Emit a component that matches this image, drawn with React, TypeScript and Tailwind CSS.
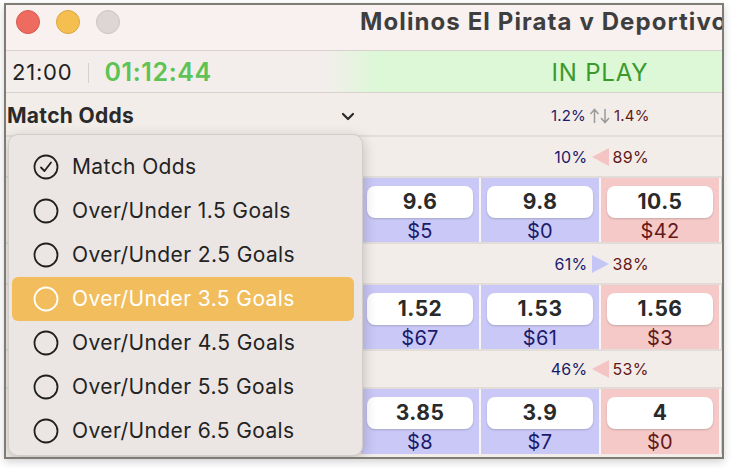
import React from "react";

type OddsCell = { price: string; amount: string; side: "back" | "lay" };

const rows: { left: string; right: string; dir: "left" | "right"; h: string; cells: OddsCell[] }[] = [
  {
    left: "10%",
    right: "89%",
    dir: "left",
    h: "h-[41px]",
    cells: [
      { price: "9.6", amount: "$5", side: "back" },
      { price: "9.8", amount: "$0", side: "back" },
      { price: "10.5", amount: "$42", side: "lay" },
    ],
  },
  {
    left: "61%",
    right: "38%",
    dir: "right",
    h: "h-[41px]",
    cells: [
      { price: "1.52", amount: "$67", side: "back" },
      { price: "1.53", amount: "$61", side: "back" },
      { price: "1.56", amount: "$3", side: "lay" },
    ],
  },
  {
    left: "46%",
    right: "53%",
    dir: "left",
    h: "h-[38px]",
    cells: [
      { price: "3.85", amount: "$8", side: "back" },
      { price: "3.9", amount: "$7", side: "back" },
      { price: "4", amount: "$0", side: "lay" },
    ],
  },
];

const markets = [
  "Match Odds",
  "Over/Under 1.5 Goals",
  "Over/Under 2.5 Goals",
  "Over/Under 3.5 Goals",
  "Over/Under 4.5 Goals",
  "Over/Under 5.5 Goals",
  "Over/Under 6.5 Goals",
];

function Triangle({ dir }: { dir: "left" | "right" }) {
  return (
    <svg width="17" height="18" viewBox="0 0 17 18" className="shrink-0">
      {dir === "left" ? (
        <path d="M0 9 L17 0 L17 18 Z" fill="#f4c4c4" />
      ) : (
        <path d="M17 9 L0 0 L0 18 Z" fill="#c6c6f6" />
      )}
    </svg>
  );
}

function PercentRow({ left, right, h, children }: { left: string; right: string; h: string; children: React.ReactNode }) {
  return (
    <div className={`flex ${h} shrink-0 items-center border-t-2 border-[#e2ddd9]`}>
      <div className="w-[355px] shrink-0" />
      <div className="grid w-[478px] shrink-0 grid-cols-[1fr_auto_1fr] items-center gap-[4px] text-[16px] tracking-[0.3px]">
        <span className="text-right text-[#1b1a6b]">{left}</span>
        {children}
        <span className="text-left text-[#641818]">{right}</span>
      </div>
    </div>
  );
}

function Cell({ cell }: { cell: OddsCell }) {
  const back = cell.side === "back";
  return (
    <div
      className={`flex w-[118px] shrink-0 flex-col items-center pt-[8px] ${
        back ? "bg-[#c9c8f6]" : "bg-[#f5c9c8]"
      }`}
    >
      <div className="flex h-[32px] w-[106px] items-center justify-center rounded-[8px] bg-white text-[21px] font-bold tracking-[0.5px] text-[#2a2a2a] shadow-[0_1px_2px_rgba(0,0,0,0.18)]">
        {cell.price}
      </div>
      <div className={`mt-[1px] text-[20px] leading-[24px] tracking-[0.3px] ${back ? "text-[#1b1a6b]" : "text-[#641818]"}`}>
        {cell.amount}
      </div>
    </div>
  );
}

function MenuIcon({ checked, light }: { checked: boolean; light: boolean }) {
  const c = light ? "#ffffff" : "#1f1f1f";
  return (
    <svg width="26" height="26" viewBox="0 0 26 26" className="shrink-0">
      <circle cx="13" cy="13" r="11.5" fill="none" stroke={c} strokeWidth="1.8" />
      {checked && <path d="M8 13.5 L11.5 17 L18 8.5" fill="none" stroke={c} strokeWidth="1.8" strokeLinecap="round" strokeLinejoin="round" />}
    </svg>
  );
}

export default function App() {
  return (
    <div className="min-h-screen bg-white pl-[4px] pt-[3px] font-['Inter',sans-serif]">
      <div className="relative flex h-[456px] w-[720px] flex-col overflow-hidden border-2 border-[#7e7c74] bg-[#f2ede9] shadow-[0_3px_8px_rgba(0,0,0,0.18)]">
        {/* title bar */}
        <div className="flex h-[46px] shrink-0 items-start border-b border-[#d9d3d0] bg-[#f8f1ef] pt-[5px]">
          <div className="flex gap-[16px] pl-[10px]">
            <span className="h-[24px] w-[24px] rounded-full border border-[#d85a50] bg-[#ee6b5f]" />
            <span className="h-[24px] w-[24px] rounded-full border border-[#dba640] bg-[#f5bf4f]" />
            <span className="h-[24px] w-[24px] rounded-full border border-[#cbc4c2] bg-[#ddd6d4]" />
          </div>
          <div className="ml-[240px] whitespace-nowrap text-[24px] font-bold leading-[24px] tracking-[1.1px] text-[#3e3e3e]">
            Molinos El Pirata v Deportivo
          </div>
        </div>

        {/* status row */}
        <div className="flex h-[42px] shrink-0 items-center border-b border-[#d8d3cf] bg-[linear-gradient(to_right,#f3eeeb_320px,#dcf8d6_372px)] pt-[2px]">
          <div className="flex w-[355px] shrink-0 items-center">
            <span className="pl-[6px] text-[22px] tracking-[0.8px] text-[#222]">21:00</span>
            <span className="ml-[16px] h-[20px] w-px bg-[#d6d1cd]" />
            <span className="ml-[15px] text-[25px] font-semibold tracking-[0.6px] text-[#5cc354]">01:12:44</span>
          </div>
          <div className="w-[478px] shrink-0 text-center text-[24px] tracking-[0.8px] text-[#3a9a2e]">IN PLAY</div>
        </div>

        {/* market header */}
        <div className="flex h-[42px] shrink-0 items-center pt-[4px]">
          <div className="flex w-[355px] shrink-0 items-center justify-between pl-[1px] pr-[6px]">
            <span className="text-[21px] font-bold tracking-[0.3px] text-[#2a2a2a]">Match Odds</span>
            <svg width="14" height="9" viewBox="0 0 14 9">
              <path d="M2 2 L7 7 L12 2" fill="none" stroke="#2a2a2a" strokeWidth="2.2" strokeLinecap="round" strokeLinejoin="round" />
            </svg>
          </div>
          <div className="grid w-[478px] shrink-0 grid-cols-[1fr_auto_1fr] items-center gap-[3px] text-[15px] tracking-[0.2px]">
            <span className="text-right text-[#1b1a6b]">1.2%</span>
            <svg width="22" height="16" viewBox="0 0 22 16">
              <path d="M5.5 15 V2 M1.5 6 L5.5 1.5 L9.5 6" fill="none" stroke="#9a9a9a" strokeWidth="1.5" />
              <path d="M16 1 V14 M12 10 L16 14.5 L20 10" fill="none" stroke="#9a9a9a" strokeWidth="1.5" />
            </svg>
            <span className="text-left text-[#641818]">1.4%</span>
          </div>
        </div>

        {rows.map((r, ri) => (
          <React.Fragment key={r.left + r.right}>
            <PercentRow left={r.left} right={r.right} h={r.h}>
              <Triangle dir={r.dir} />
            </PercentRow>
            <div
              className={`flex shrink-0 border-t-2 border-[#e2ddd9] ${
                ri === rows.length - 1 ? "flex-1 pb-[3px]" : "h-[66px]"
              }`}
            >
              <div className="w-[355px] shrink-0" />
              <div className="flex gap-[2px] bg-[#f8f6f4]">
                {r.cells.map((c, i) => (
                  <Cell key={i} cell={c} />
                ))}
                <div className="w-[118px] shrink-0 bg-[#c9c8f6]" />
              </div>
            </div>
          </React.Fragment>
        ))}

        {/* market dropdown */}
        <div className="absolute left-[2px] top-[129px] flex h-[322px] w-[355px] flex-col rounded-[10px] border border-[#d3cdc9] bg-[#ebe6e3] pt-[10px] shadow-[0_4px_14px_rgba(0,0,0,0.22)]">
          {markets.map((m, i) => {
            const active = i === 3;
            return (
              <div
                key={m}
                className={`ml-[3px] flex h-[44px] w-[342px] items-center gap-[13px] rounded-[6px] pl-[21px] text-[21px] tracking-[0.4px] ${
                  active ? "bg-[#f2be5d] text-white" : "text-[#232323]"
                }`}
              >
                <MenuIcon checked={i === 0} light={active} />
                <span>{m}</span>
              </div>
            );
          })}
        </div>
      </div>
    </div>
  );
}
